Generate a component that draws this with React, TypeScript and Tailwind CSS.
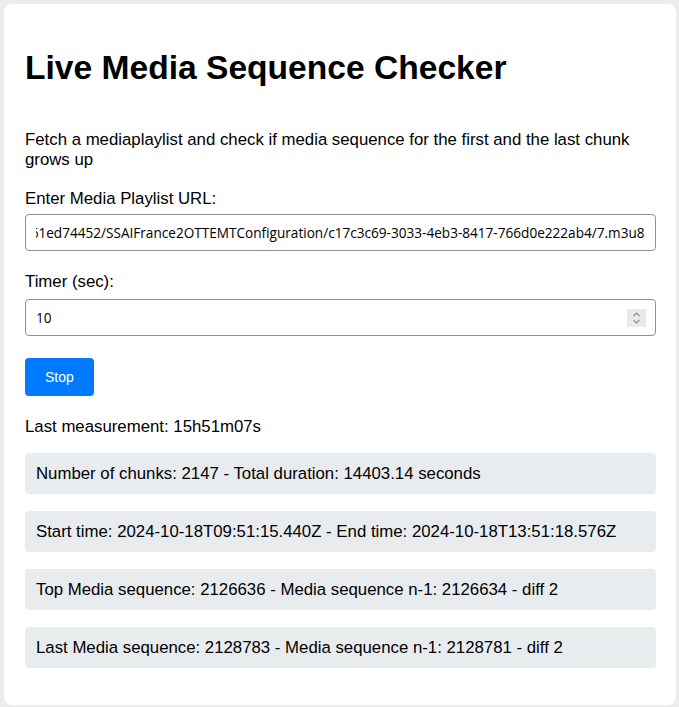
import React, { useEffect, useRef } from "react";

const PLAYLIST_URL =
  "https://live-ssai.example.net/v1/master/3fec3e5cac39a52b2132f9c66c19fae261ed74452/SSAIFrance2OTTEMTConfiguration/c17c3c69-3033-4eb3-8417-766d0e222ab4/7.m3u8";

const results = [
  "Number of chunks: 2147 - Total duration: 14403.14 seconds",
  "Start time: 2024-10-18T09:51:15.440Z - End time: 2024-10-18T13:51:18.576Z",
  "Top Media sequence: 2126636 - Media sequence n-1: 2126634 - diff 2",
  "Last Media sequence: 2128783 - Media sequence n-1: 2128781 - diff 2",
];

export default function App() {
  const urlRef = useRef<HTMLInputElement>(null);

  // the field shows the tail of the url, as after typing it
  useEffect(() => {
    const el = urlRef.current;
    if (el) el.scrollLeft = el.scrollWidth;
  }, []);

  return (
    <div className="min-h-screen bg-[#ececec] pl-[4px] pr-[3px] pt-[4px] pb-[2px] font-['Liberation_Sans',Arial,sans-serif] text-black">
      <div className="rounded-[8px] bg-white pl-[21px] pr-[20px] pt-[20px] pb-[37px]">
        <h1 className="mt-[24px] text-[33.6px] leading-[39px] font-bold">Live Media Sequence Checker</h1>

        <p className="mt-[42.5px] text-[16.8px] leading-[20px]">
          Fetch a mediaplaylist and check if media sequence for the first and the last chunk grows up
        </p>

        <label className="mt-[19.5px] block text-[16.8px] leading-[20px]">Enter Media Playlist URL:</label>
        <input
          ref={urlRef}
          type="text"
          readOnly
          value={PLAYLIST_URL}
          className="mt-[5px] block h-[37px] w-full rounded-[4px] border border-[#8f8f9d] bg-white px-[10px] font-['Open_Sans',sans-serif] text-[13.6px] text-black outline-none"
        />

        <label className="mt-[21px] block text-[16.8px] leading-[20px]">Timer (sec):</label>
        <div className="relative mt-[7px]">
          <input
            type="text"
            readOnly
            value="10"
            className="block h-[37px] w-full rounded-[4px] border border-[#8f8f9d] bg-white px-[10px] font-['Open_Sans',sans-serif] text-[13.6px] text-black outline-none"
          />
          <span className="absolute right-[10px] top-[10px] flex h-[18px] w-[19px] flex-col items-center justify-center bg-[#e9e9ed]">
            <svg width="9" height="14" viewBox="0 0 9 14" fill="none" stroke="#8f8f9d" strokeWidth="1.2">
              <path d="M1.5 5 L4.5 2 L7.5 5" />
              <path d="M1.5 9 L4.5 12 L7.5 9" />
            </svg>
          </span>
        </div>

        <button className="mt-[22px] block h-[38px] rounded-[4px] bg-[#007bff] px-[20px] text-[14px] text-white">
          Stop
        </button>

        <p className="mt-[21px] text-[16.8px] leading-[20px]">Last measurement: 15h51m07s</p>

        <div className="mt-[16px] flex flex-col gap-[17px]">
          {results.map((line) => (
            <div
              key={line}
              className="flex h-[41px] items-center rounded-[4px] bg-[#e9ecef] px-[11px] text-[16.8px] leading-[20px]"
            >
              {line}
            </div>
          ))}
        </div>
      </div>
    </div>
  );
}
